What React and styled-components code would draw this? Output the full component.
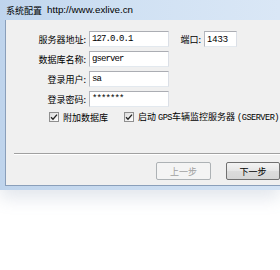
import React from 'react';
import styled, { createGlobalStyle } from 'styled-components';

const GlobalStyle = createGlobalStyle`
  html, body {
    margin: 0;
    padding: 0;
    background: #ffffff;
    overflow: hidden;
  }
  body {
    width: 280px;
    height: 270px;
    font-family: "Noto Sans CJK SC", "Liberation Sans", sans-serif;
    color: #000;
  }
`;

const Window = styled.div`
  width: 280px;
  background: linear-gradient(to right, #bfd4ec, #d4e3f4);
  box-shadow: 0 8px 16px rgba(110, 130, 160, 0.2);
`;

const TitleBar = styled.div`
  height: 20px;
  display: flex;
  align-items: center;
  gap: 5px;
  padding-left: 6px;
  background: linear-gradient(to right, #bfd4ed 0%, #d0e1f3 45%, #dae7f6 100%);
  font-size: 9px;
  line-height: 1;
`;

const TitleUrl = styled.span`
  font-family: "Liberation Sans", Arial, sans-serif;
  font-size: 9.8px;
`;

const Frame = styled.div`
  padding: 0 0 4px 5px;
`;

const Panel = styled.div`
  box-sizing: border-box;
  height: 166px;
  padding-top: 11px;
  background: #f0f0f0;
  border-left: 1px solid #8a9fba;
  border-bottom: 1px solid #8a9fba;
  overflow: hidden;
`;

const Fields = styled.div`
  display: flex;
  flex-direction: column;
  gap: 4px;
`;

const Row = styled.div`
  display: flex;
  align-items: center;
  height: 16px;
`;

const Label = styled.span`
  width: ${p => p.$width || 80}px;
  margin-left: ${p => p.$offset || 0}px;
  text-align: right;
  font-size: 9px;
  line-height: 1;
  white-space: nowrap;
`;

const Input = styled.div`
  box-sizing: border-box;
  width: ${p => p.$width}px;
  height: 16px;
  margin-left: 3px;
  background: #fff;
  border: 1px solid;
  border-color: #abadb3 #dbdfe6 #e3e9ef #b5b8bf;
  display: flex;
  align-items: center;
  padding-left: 2px;
  font-family: ${p => (p.$sans ? '"Liberation Sans", Arial, sans-serif' : '"Liberation Mono", "Courier New", monospace')};
  font-size: ${p => (p.$sans ? '9.4px' : '9px')};
  letter-spacing: ${p => (p.$sans ? '0' : '-0.9px')};
  line-height: 1;
`;

const CheckRow = styled.div`
  display: flex;
  align-items: center;
  height: 12px;
  margin-top: 4px;
  padding-left: 43px;
`;

const CheckItem = styled.label`
  display: flex;
  align-items: center;
  gap: 4px;
  margin-right: ${p => p.$space || 0}px;
  font-size: 9px;
  line-height: 1;
  white-space: nowrap;
`;

const Box = styled.span`
  box-sizing: border-box;
  width: 10px;
  height: 10px;
  border: 1px solid #8f8f8f;
  background: linear-gradient(135deg, #dcdcdc, #ffffff);
  display: flex;
  align-items: center;
  justify-content: center;
`;

const Mono = styled.span`
  font-family: "Liberation Mono", "Courier New", monospace;
  font-size: 8.6px;
  letter-spacing: -0.5px;
`;

const Separator = styled.div`
  margin: 30px 0 0 8px;
  border-top: 1px solid #a0a0a0;
  border-bottom: 1px solid #ffffff;
`;

const ButtonRow = styled.div`
  display: flex;
  gap: 15px;
  margin-top: 7px;
  padding-left: 150px;
`;

const Button = styled.button`
  box-sizing: border-box;
  width: ${p => p.$width || 55}px;
  height: 18px;
  padding: 0;
  border: 1px solid ${p => (p.disabled ? '#adb2b5' : '#707070')};
  border-radius: 2px;
  background: ${p => (p.disabled ? '#f4f4f4' : 'linear-gradient(#f3f3f3, #e6e6e6 50%, #dcdcdc 51%, #d6d6d6)')};
  color: ${p => (p.disabled ? '#a0a0a0' : '#000')};
  font-family: "Noto Sans CJK SC", sans-serif;
  font-size: 9px;
  line-height: 1;
`;

const Check = () => (
  <Box>
    <svg width="8" height="8" viewBox="0 0 8 8">
      <path d="M1 4.2 L3 6.2 L7 1.6" fill="none" stroke="#222" strokeWidth="1.3" />
    </svg>
  </Box>
);

export default function App() {
  return (
    <>
      <GlobalStyle />
      <Window>
        <TitleBar>
          <span>系统配置</span>
          <TitleUrl>http://www.exlive.cn</TitleUrl>
        </TitleBar>
        <Frame>
          <Panel>
            <Fields>
              <Row>
                <Label>服务器地址:</Label>
                <Input $width={80}>127.0.0.1</Input>
                <Label $width={22} $offset={10}>端口:</Label>
                <Input $width={33} $sans>1433</Input>
              </Row>
              <Row>
                <Label>数据库名称:</Label>
                <Input $width={80}>gserver</Input>
              </Row>
              <Row>
                <Label>登录用户:</Label>
                <Input $width={80}>sa</Input>
              </Row>
              <Row>
                <Label>登录密码:</Label>
                <Input $width={80}>*******</Input>
              </Row>
            </Fields>
            <CheckRow>
              <CheckItem $space={16}>
                <Check />
                附加数据库
              </CheckItem>
              <CheckItem>
                <Check />
                <span>
                  启动 <Mono>GPS</Mono>车辆监控服务器 <Mono>(GSERVER)</Mono>
                </span>
              </CheckItem>
            </CheckRow>
            <Separator />
            <ButtonRow>
              <Button disabled>上一步</Button>
              <Button $width={54}>下一步</Button>
            </ButtonRow>
          </Panel>
        </Frame>
      </Window>
    </>
  );
}
